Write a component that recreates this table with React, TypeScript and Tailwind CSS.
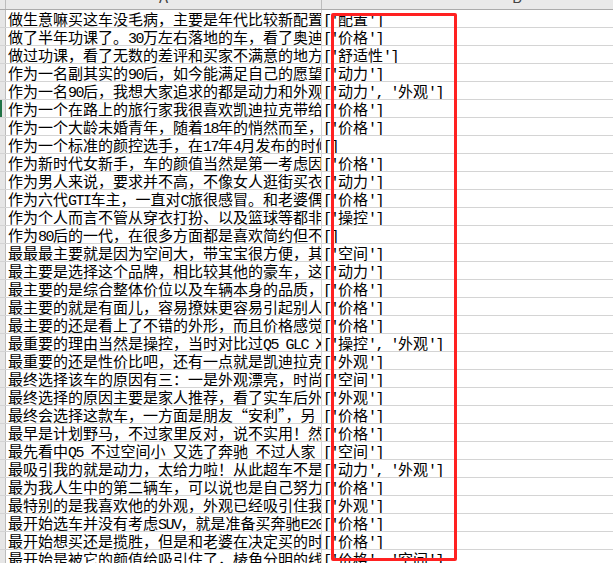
const rows: [string, string][] = [
  ["做生意嘛买这车没毛病，主要是年代比较新配置高", "['配置']"],
  ["做了半年功课了。30万左右落地的车，看了奥迪宝马", "['价格']"],
  ["做过功课，看了无数的差评和买家不满意的地方", "['舒适性']"],
  ["作为一名副其实的90后，如今能满足自己的愿望", "['动力']"],
  ["作为一名90后，我想大家追求的都是动力和外观", "['动力', '外观']"],
  ["作为一个在路上的旅行家我很喜欢凯迪拉克带给我", "['价格']"],
  ["作为一个大龄未婚青年，随着18年的悄然而至，", "['价格']"],
  ["作为一个标准的颜控选手，在17年4月发布的时候", "[]"],
  ["作为新时代女新手，车的颜值当然是第一考虑因素", "['价格']"],
  ["作为男人来说，要求并不高，不像女人逛街买衣服", "['动力']"],
  ["作为六代GTI车主，一直对C旅很感冒。和老婆偶然", "['价格']"],
  ["作为个人而言不管从穿衣打扮、以及篮球等都非常", "['操控']"],
  ["作为80后的一代，在很多方面都是喜欢简约但不", "[]"],
  ["最最最主要就是因为空间大，带宝宝很方便，其次", "['空间']"],
  ["最主要是选择这个品牌，相比较其他的豪车，这个", "['动力']"],
  ["最主要的是综合整体价位以及车辆本身的品质，", "['价格']"],
  ["最主要的就是有面儿，容易撩妹更容易引起别人", "['价格']"],
  ["最主要的还是看上了不错的外形，而且价格感觉", "['价格']"],
  ["最重要的理由当然是操控，当时对比过Q5 GLC X3", "['操控', '外观']"],
  ["最重要的还是性价比吧，还有一点就是凯迪拉克", "['外观']"],
  ["最终选择该车的原因有三：一是外观漂亮，时尚", "['空间']"],
  ["最终选择的原因主要是家人推荐，看了实车后外观", "['外观']"],
  ["最终会选择这款车，一方面是朋友“安利”，另", "['价格']"],
  ["最早是计划野马，不过家里反对，说不实用！然", "['价格']"],
  ["最先看中Q5 不过空间小 又选了奔驰 不过人家", "['空间']"],
  ["最吸引我的就是动力，太给力啦！从此超车不是", "['动力', '外观']"],
  ["最为我人生中的第二辆车，可以说也是自己努力", "['价格']"],
  ["最特别的是我喜欢他的外观，外观已经吸引住我", "['外观']"],
  ["最开始选车并没有考虑SUV，就是准备买奔驰E200", "['价格']"],
  ["最开始想买还是揽胜，但是和老婆在决定买的时", "['价格']"],
  ["最开始是被它的颜值给吸引住了，棱角分明的线", "['价格', '空间']"],
];

// half-width ascii like the sheet's song font: mono glyphs squeezed to 7.5px
function Cell({ s }: { s: string }) {
  const parts = s.match(/[\x20-\x7e]+|[^\x20-\x7e]+/g) || [];
  return (
    <>
      {parts.map((p, i) =>
        /^[\x20-\x7e]/.test(p) ? (
          <span key={i} className="font-['Liberation_Mono',monospace] tracking-[-1.5px]">
            {p}
          </span>
        ) : (
          <span key={i}>{p}</span>
        )
      )}
    </>
  );
}

export default function App() {
  return (
    <div
      className="relative w-[613px] h-[563px] overflow-hidden bg-white text-black"
      style={{ fontFamily: '"Noto Sans CJK SC", "Noto Sans", sans-serif' }}
    >
      {/* column headers, scrolled mostly out of view */}
      <div className="flex h-[10px] border-b border-[#ababab] bg-[#e9e9e9]">
        <div className="w-[6px] border-r border-[#bdbdbd]" />
        <div className="w-[316px] overflow-hidden border-r border-[#bdbdbd]">
          <div className="-mt-[9px] text-center text-[15px] leading-[12px] text-[#444]">A</div>
        </div>
        <div className="flex-1 overflow-hidden">
          <div className="-mt-[9px] pl-[190px] text-[15px] leading-[12px] text-[#444]">B</div>
        </div>
      </div>

      {rows.map(([text, tags], i) => (
        <div key={i} className="flex h-[18px] border-b border-[#d4d4d4]">
          <div
            className={
              i === 5
                ? "w-[6px] border-l-2 border-l-[#217346] border-r border-r-[#bdbdbd] bg-[#e6e6e6]"
                : "w-[6px] border-r border-[#bdbdbd] bg-[#e6e6e6]"
            }
          />
          <div className="w-[316px] overflow-hidden whitespace-pre border-r border-[#d4d4d4] pl-[2px] text-[15px] leading-[17px]">
            <Cell s={text} />
          </div>
          <div className="flex-1 overflow-hidden whitespace-pre pl-[1px] text-[15px] leading-[17px]">
            <Cell s={tags} />
          </div>
        </div>
      ))}

      {/* red highlight box */}
      <div className="absolute left-[331px] top-[13px] w-[126px] h-[548px] rounded-[2px] border-[3px] border-[#ff2121]" />
    </div>
  );
}
